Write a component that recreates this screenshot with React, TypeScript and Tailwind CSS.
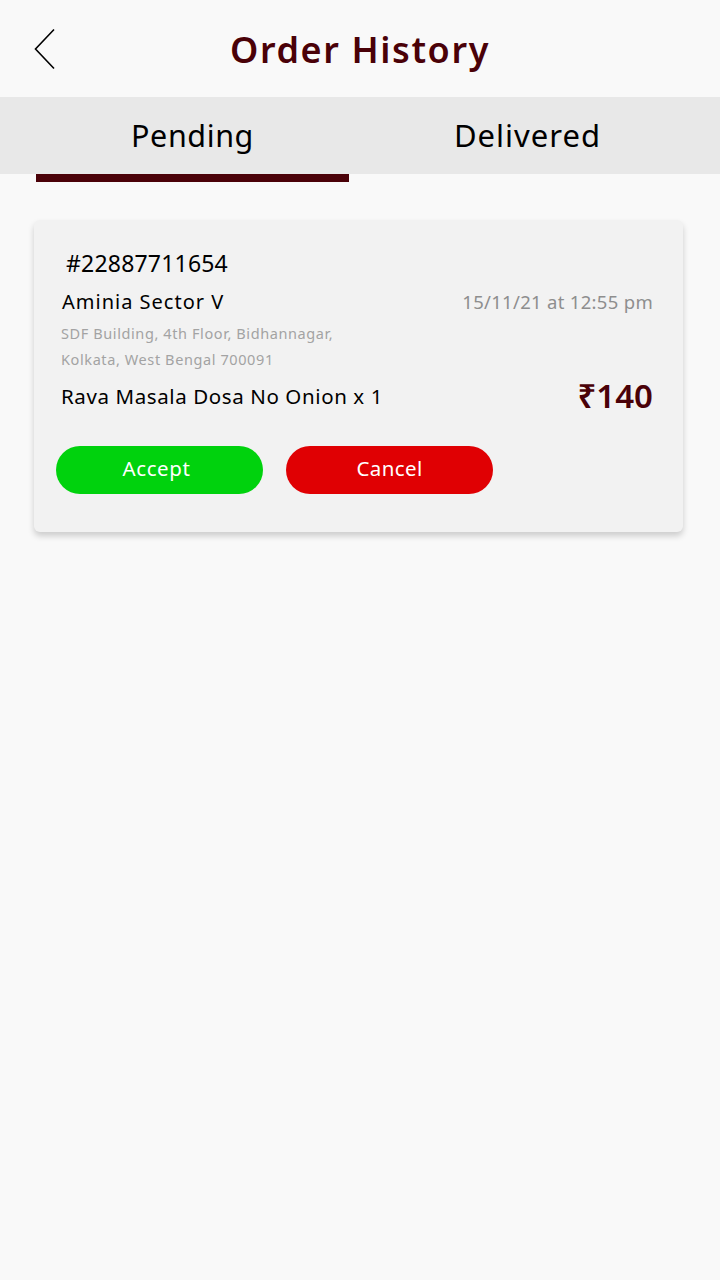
import React from "react";

const OrderCard = () => {
  return (
    <div className="ml-[34px] mr-[37px] mt-[38px] rounded-md bg-[#f2f2f2] pl-[27px] pr-[28px] pt-[28px] pb-[38px] shadow-[0_4px_6px_rgba(0,0,0,0.18)]">
      <div className="pl-[5px] text-[23px] leading-[30px] tracking-[0.2px] text-black">#22887711654</div>
      <div className="mt-[9px] flex items-center justify-between">
        <span className="pl-[1px] text-[20px] leading-[30px] tracking-[1px] text-black">Aminia Sector V</span>
        <span className="pr-[2px] text-[18.5px] leading-[30px] tracking-[0.3px] text-[#8e8e8e]">15/11/21 at 12:55 pm</span>
      </div>
      <div className="mt-[3px] text-[14.5px] leading-[26px] tracking-[0.6px] text-[#a3a3a3]">
        <div>SDF Building, 4th Floor, Bidhannagar,</div>
        <div>Kolkata, West Bengal 700091</div>
      </div>
      <div className="mt-[6px] flex items-center justify-between">
        <span className="text-[20.5px] leading-[36px] tracking-[0.6px] text-black">Rava Masala Dosa No Onion x 1</span>
        <span className="pr-[2px] text-[33px] font-semibold leading-[36px] text-[#4a0108]">₹140</span>
      </div>
      <div className="mt-[32px] flex gap-[23px]">
        <button className="-ml-[5px] h-[48px] w-[207px] rounded-full bg-[#00d20d] pr-[6px] pb-[3px] text-[20.5px] tracking-[0.6px] text-white">
          Accept
        </button>
        <button className="h-[48px] w-[207px] rounded-full bg-[#e00003] pb-[3px] text-[20.5px] tracking-[0.4px] text-white">
          Cancel
        </button>
      </div>
    </div>
  );
};

const App = () => {
  return (
    <div className="min-h-[1280px] w-full bg-[#f9f9f9] font-['Noto_Sans',sans-serif]">
      <div className="relative flex h-[97px] items-center justify-center">
        <button className="absolute left-[33px] top-[28px]">
          <svg width="24" height="42" viewBox="0 0 24 42" fill="none">
            <path d="M21 1.5 L2.5 21 L21 40.5" stroke="black" strokeWidth="1.6" />
          </svg>
        </button>
        <h1 className="mt-[2px] text-[36px] font-semibold tracking-[1.6px] text-[#4a0108]">Order History</h1>
      </div>
      <div className="flex h-[77px] bg-[#e8e8e8] px-[25px]">
        <div className="flex flex-1 items-center justify-center text-[30.5px] tracking-[0.6px] text-black">
          Pending
        </div>
        <div className="flex flex-1 items-center justify-center text-[31px] tracking-[1px] text-black">
          Delivered
        </div>
      </div>
      <div className="ml-[36px] h-[8px] w-[313px] bg-[#4a0108]" />
      <OrderCard />
    </div>
  );
};

export default App;
